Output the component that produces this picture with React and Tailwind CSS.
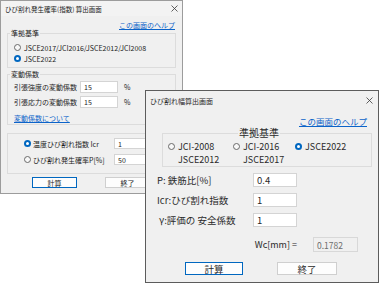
import React from 'react'

// Two overlapping Win11-style dialogs on a white desktop

const jp = { fontFamily: '"Noto Sans CJK JP", "Noto Sans", sans-serif' }

const CloseX = () => (
  <svg width="7" height="7" viewBox="0 0 7 7" className="shrink-0">
    <path d="M0.5 0.5 L6.5 6.5 M6.5 0.5 L0.5 6.5" stroke="#3a3a3a" strokeWidth="0.8" fill="none" />
  </svg>
)

const Radio = ({ checked }) =>
  checked ? (
    <span className="w-[7px] h-[7px] rounded-full bg-[#0067c0] flex items-center justify-center shrink-0">
      <span className="w-[3px] h-[3px] rounded-full bg-white" />
    </span>
  ) : (
    <span className="block w-[7px] h-[7px] rounded-full border border-[#6a6a6a] bg-[#f8f8f8] shrink-0" />
  )

const BackWindow = () => (
  <div
    className="absolute left-0 top-0 w-[183px] h-[194px] bg-[#f0f0f0] border border-[#9c9c9c] flex flex-col text-[7px] leading-[8px] text-[#1b1b1b]"
    style={jp}
  >
    {/* title bar */}
    <div className="h-[15px] bg-[#f3f3f3] flex items-center justify-between pl-[4px] pr-[4px] text-[6.5px]">
      <span>ひび割れ発生確率(指数) 算出画面</span>
      <CloseX />
    </div>

    <div className="px-[6px] flex flex-col">
      <div className="mt-[5px] self-end pr-[1px] text-[#0b63c9] underline">この画面のヘルプ</div>

      {/* 準拠基準 */}
      <div className="relative mt-[4px] h-[35px] border border-[#dcdcdc] pl-[6px] pt-[8px] flex flex-col">
        <span className="absolute -top-[5px] left-[2px] px-[1px] bg-[#f0f0f0]">準拠基準</span>
        <div className="h-[11px] flex items-center gap-[3px]">
          <Radio />
          <span>JSCE2017/JCI2016/JSCE2012/JCI2008</span>
        </div>
        <div className="h-[11px] flex items-center gap-[3px]">
          <Radio checked />
          <span>JSCE2022</span>
        </div>
      </div>

      {/* 変動係数 */}
      <div className="relative mt-[6px] h-[51px] border border-[#dcdcdc] pl-[6px] pt-[6px] flex flex-col">
        <span className="absolute -top-[5px] left-[2px] px-[1px] bg-[#f0f0f0]">変動係数</span>
        <div className="h-[12px] flex items-center">
          <span className="w-[66px]">引張強度の変動係数</span>
          <div className="w-[38px] h-[12px] bg-white border border-[#d4d4d4] flex items-center pl-[3px]">15</div>
          <span className="ml-[6px]">%</span>
        </div>
        <div className="mt-[3px] h-[12px] flex items-center">
          <span className="w-[66px]">引張応力の変動係数</span>
          <div className="w-[38px] h-[12px] bg-white border border-[#d4d4d4] flex items-center pl-[3px]">15</div>
          <span className="ml-[6px]">%</span>
        </div>
        <span className="mt-[6px] text-[#0b63c9] underline">変動係数について</span>
      </div>

      {/* mode */}
      <div className="mt-[8px] h-[41px] border border-[#dcdcdc] pl-[16px] pt-[4px] flex flex-col">
        <div className="h-[11px] flex items-center">
          <Radio checked />
          <span className="ml-[2px] w-[81px]">温度ひび割れ指数 Icr</span>
          <div className="w-[40px] h-[11px] bg-white border border-[#d4d4d4] flex items-center pl-[3px]">1</div>
        </div>
        <div className="mt-[5px] h-[11px] flex items-center">
          <Radio />
          <span className="ml-[2px] w-[81px]">ひび割れ発生確率P[%]</span>
          <div className="w-[40px] h-[11px] bg-white border border-[#d4d4d4] flex items-center pl-[3px]">50</div>
        </div>
      </div>

      <div className="mt-[3px] flex">
        <div className="ml-[25px] w-[45px] h-[11px] bg-[#fdfdfd] border border-[#0067c0] flex items-center justify-center">計算</div>
        <div className="ml-[28px] w-[45px] h-[11px] bg-[#fdfdfd] border border-[#cfcfcf] flex items-center justify-center">終了</div>
      </div>
    </div>
  </div>
)

const Field = ({ label, value, indent }) => (
  <div className="h-[14px] flex items-center">
    <span className={indent ? 'w-[96px] pl-[2px]' : 'w-[96px]'}>{label}</span>
    <div className="w-[44px] h-[14px] bg-white border border-[#d4d4d4] flex items-center pl-[3px]">{value}</div>
  </div>
)

const FrontWindow = () => (
  <div
    className="absolute left-[145px] top-[90px] w-[234px] h-[193px] bg-[#f0f0f0] border border-[#5c5c5c] flex flex-col text-[9.5px] leading-[12px] text-[#2a2a2a]"
    style={jp}
  >
    <div className="h-[19px] flex items-center justify-between pl-[4px] pr-[5px] text-[7px]">
      <span>ひび割れ幅算出画面</span>
      <CloseX />
    </div>

    <div className="mt-[6px] self-end pr-[11px] text-[8.5px] leading-[10px] text-[#0b63c9] underline">この画面のヘルプ</div>

    {/* 準拠基準 */}
    <div className="relative mt-[7px] ml-[16px] w-[210px] h-[34px] border border-[#dcdcdc] pl-[5px] pt-[6px] flex text-[9px] leading-[13px]">
      <span className="absolute -top-[6px] left-[75px] px-[1px] bg-[#f0f0f0] text-[10px] leading-[10px]">準拠基準</span>
      <div className="w-[65px] flex items-start gap-[3px]">
        <span className="mt-[3px] flex"><Radio /></span>
        <span className="flex flex-col">
          <span>JCI-2008</span>
          <span>JSCE2012</span>
        </span>
      </div>
      <div className="w-[62px] flex items-start gap-[3px]">
        <span className="mt-[3px] flex"><Radio /></span>
        <span className="flex flex-col">
          <span>JCI-2016</span>
          <span>JSCE2017</span>
        </span>
      </div>
      <div className="flex items-start gap-[3px]">
        <span className="mt-[3px] flex"><Radio checked /></span>
        <span>JSCE2022</span>
      </div>
    </div>

    <div className="mt-[6px] pl-[11px] flex flex-col gap-[6px]">
      <Field label="P: 鉄筋比[%]" value="0.4" />
      <Field label="Icr:ひび割れ指数" value="1" />
      <Field label="γ:評価の 安全係数" value="1" indent />
    </div>

    <div className="mt-[10px] pl-[11px] flex items-center">
      <span className="w-[140px] text-right text-[9px]">Wc[mm] =</span>
      <div className="ml-[16px] w-[45px] h-[15px] bg-[#f0f0f0] border border-[#d8d8d8] flex items-center pl-[3px] text-[#6d6d6d] text-[8.5px]">0.1782</div>
    </div>

    <div className="mt-[10px] pl-[11px] flex">
      <div className="ml-[28px] w-[58px] h-[13px] bg-[#fdfdfd] border border-[#0067c0] flex items-center justify-center">計算</div>
      <div className="ml-[34px] w-[60px] h-[13px] bg-[#fdfdfd] border border-[#cfcfcf] flex items-center justify-center">終了</div>
    </div>
  </div>
)

export default function App() {
  return (
    <div className="relative w-[380px] h-[285px] bg-white overflow-hidden">
      <BackWindow />
      <FrontWindow />
    </div>
  )
}
